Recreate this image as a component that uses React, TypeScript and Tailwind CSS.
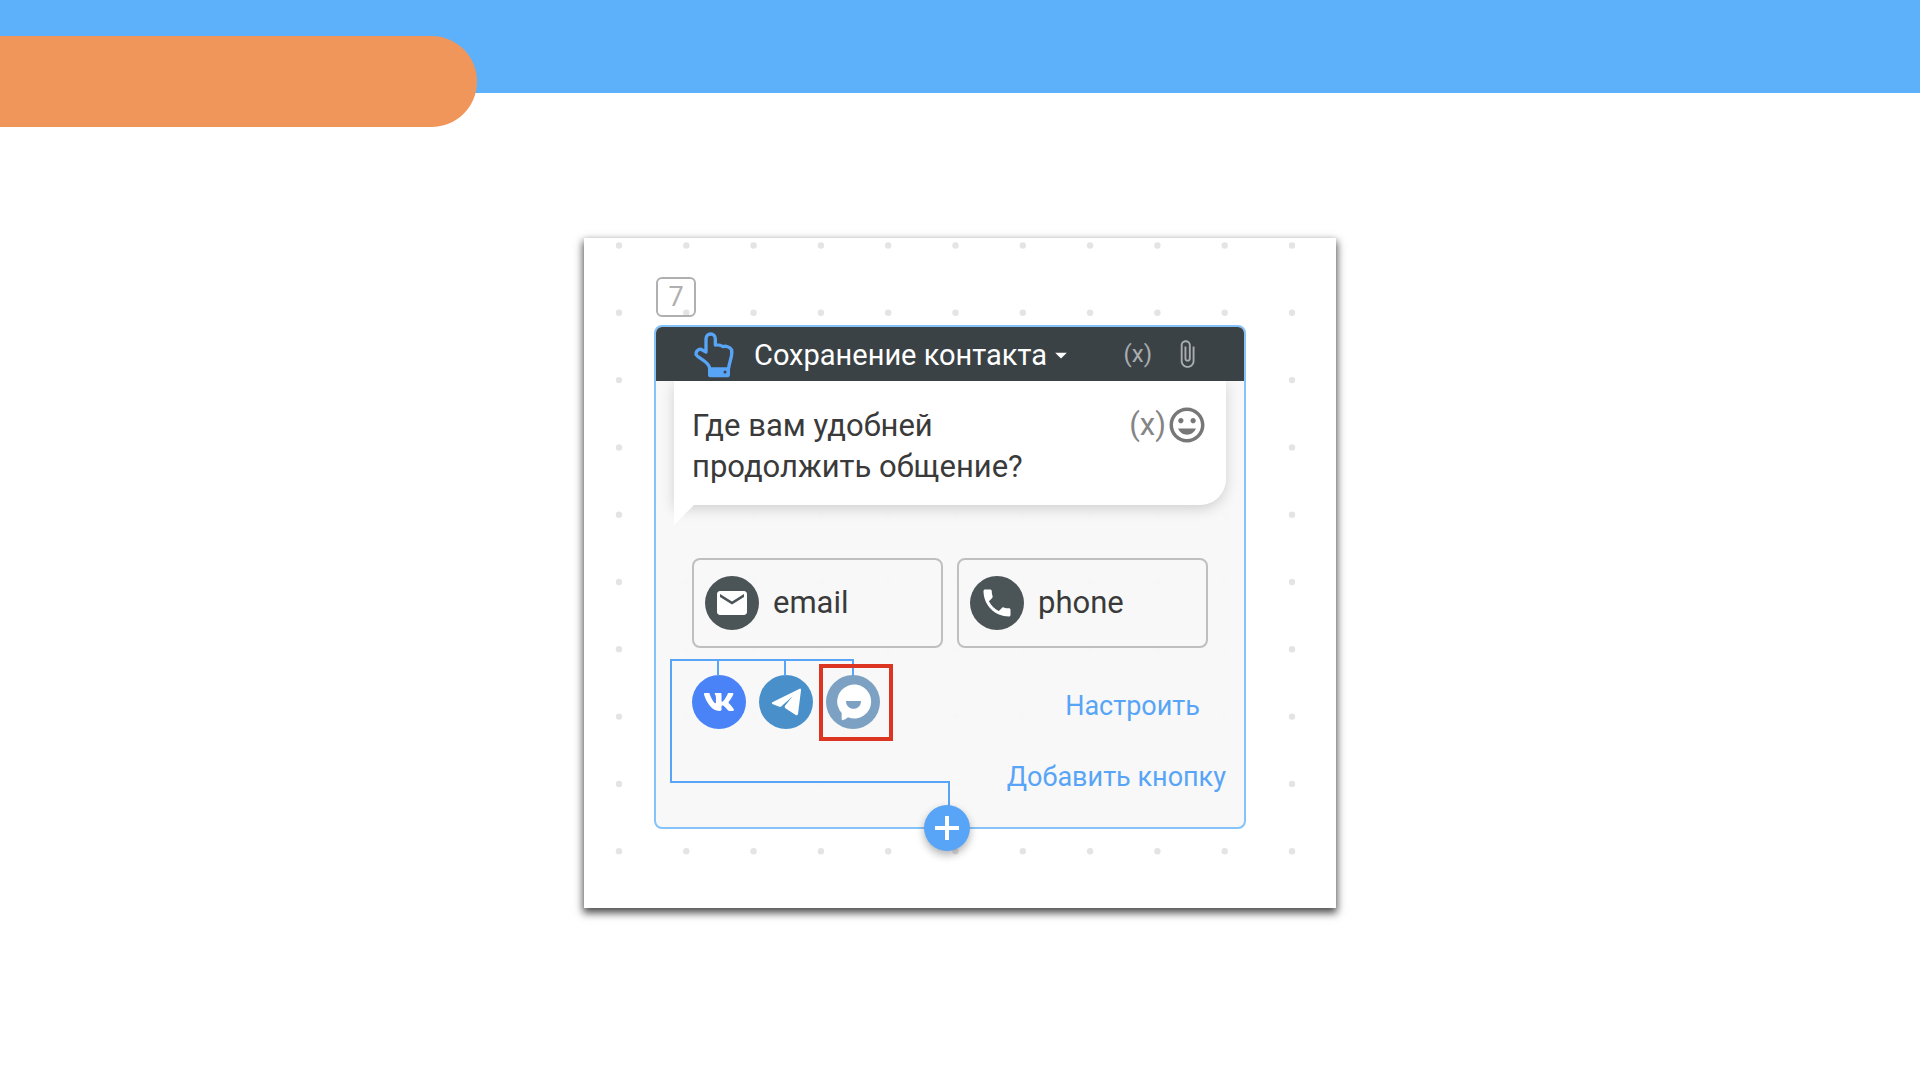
import { FaVk } from 'react-icons/fa';
import { MdArrowDropDown, MdAttachFile, MdEmail, MdInsertEmoticon, MdPhone } from 'react-icons/md';

const DOT_STEP = 67.3;

const DotGrid = () => {
	const dots = [];
	for (let row = 0; row < 10; row++) {
		for (let col = 0; col < 11; col++) {
			dots.push(<circle key={`${row}-${col}`} cx={35 + col * DOT_STEP} cy={7.5 + row * DOT_STEP} r="3.2" />);
		}
	}
	return (
		<svg className="absolute left-0 top-0 w-full" viewBox="0 0 752 670" fill="#e4e4e4" aria-hidden="true">
			{dots}
		</svg>
	);
};

const HandIcon = () => (
	<svg className="w-10 h-[46px] shrink-0" viewBox="373 337 120 138" fill="none" aria-hidden="true">
		<path
			d="M420 446C418 424 384 416 379 404C379 391 391 386 398 391L409 397V358C409 338 437 338 437 358V376C447 375 452 376 460 381C468 378 481 381 486 391C489 412 479 424 477 446"
			stroke="#58a5f7"
			strokeWidth="10"
			strokeLinejoin="round"
		/>
		<path d="M415 443H481V465Q480 473 472 473H424Q415 473 415 465Z" fill="#58a5f7" />
		<circle cx="466" cy="457" r="4.5" fill="#3b4246" />
	</svg>
);

const TelegramIcon = () => (
	<svg className="size-full" viewBox="237 344 162 162" fill="#fff" aria-hidden="true">
		<path d="M277 426L359 385Q364 384 363 390L354 461Q352 467 346 463L316 444Q312 440 315 436L338 408L306 436Q302 441 298 439L277 431Q274 428 277 426Z" />
	</svg>
);

const ChatIcon = () => (
	<svg className="size-full" viewBox="439 344 162 162" aria-hidden="true">
		<path d="M486 458A51 51 0 1 1 505 471Q497 478 488 480Q486 479 486 475Z" fill="#fff" />
		<path d="M499 422H544C544 453 499 453 499 422Z" fill="#7ca1c2" />
	</svg>
);

const Connector = () => (
	<svg
		className="absolute left-0 top-[332px] w-[296px] h-[148px]"
		viewBox="0 0 296 148"
		fill="none"
		stroke="#58a5f7"
		strokeWidth="2"
		aria-hidden="true"
	>
		<path d="M197 17V1H15V123H293V148M62 1V17M129 1V17" />
	</svg>
);

const contacts = [
	{ label: 'email', Icon: MdEmail },
	{ label: 'phone', Icon: MdPhone },
];

const ContactBlock = () => (
	<section className="relative border-2 border-[#85c4fa] rounded-lg bg-[#f8f8f8]/95">
		<div className="flex items-center justify-between h-[54px] pl-[38px] pr-[42px] rounded-t-md bg-[#3b4246]">
			<div className="flex items-center gap-5 pt-0.5">
				<HandIcon />
				<button className="flex items-center text-[29px] leading-8 text-white">
					Сохранение контакта
					<MdArrowDropDown className="size-7" />
				</button>
			</div>
			<div className="flex items-center gap-5 text-[#a9adaf]">
				<button className="text-2xl">(x)</button>
				<button aria-label="Attach">
					<MdAttachFile className="size-[30px]" />
				</button>
			</div>
		</div>

		<div className="relative mx-[18px] h-[124px] px-[18px] pt-6 flex justify-between items-start bg-white rounded-br-[26px] shadow-[0_4px_14px_rgba(0,0,0,0.16)] [clip-path:inset(0_-18px_-40px_-18px)]">
			<p className="w-[360px] text-[31px] leading-[41px] text-[#3a3a3a]">Где вам удобней продолжить общение?</p>
			<div className="flex items-center h-10 text-[#777]">
				<button className="text-[31px] text-[#858585]">(x)</button>
				<button aria-label="Emoji">
					<MdInsertEmoticon className="size-[42px]" />
				</button>
			</div>
			<svg className="absolute left-0 top-full w-5 h-5" viewBox="0 0 20 20" fill="#fff" aria-hidden="true">
				<path d="M0 0H20L0 20Z" />
			</svg>
		</div>

		<div className="flex gap-[14px] mt-[53px] mx-9">
			{contacts.map(({ label, Icon }) => (
				<button
					key={label}
					className="flex-1 flex items-center gap-[14px] h-[90px] pl-[11px] border-2 border-[#bfbfbf] rounded-lg text-[31px] leading-10 text-[#3a3a3a]"
				>
					<span className="flex items-center justify-center size-[54px] rounded-full bg-[#4b5457] text-white">
						<Icon className="size-9" />
					</span>
					{label}
				</button>
			))}
		</div>

		<Connector />

		<div className="flex items-start gap-[13px] mt-[27px] mx-9 h-[84px]">
			<button className="flex items-center justify-center size-[54px] rounded-full bg-[#4a82f8] text-white" aria-label="VK">
				<FaVk className="size-8" />
			</button>
			<button className="size-[54px] rounded-full bg-[#4990cb]" aria-label="Telegram">
				<TelegramIcon />
			</button>
			<button className="relative size-[54px] rounded-full bg-[#7ca1c2]" aria-label="Chat">
				<ChatIcon />
				<span className="absolute -left-[7px] -top-[11px] w-[74px] h-[77px] border-4 border-[#dc3522]" />
			</button>
			<button className="ml-auto mr-2 mt-[13px] text-[27px] leading-9 text-[#58a5f7]">Настроить</button>
		</div>
		<div className="flex justify-end mr-[18px] mb-8">
			<button className="text-[27px] leading-9 text-[#58a5f7]">Добавить кнопку</button>
		</div>

		<button
			className="absolute left-[268px] -bottom-6 size-[46px] rounded-full bg-[#58a5f7] shadow-[0_4px_8px_rgba(0,0,0,0.3)]"
			aria-label="Add"
		>
			<svg viewBox="0 0 46 46" stroke="#fff" strokeWidth="4" aria-hidden="true">
				<path d="M11 23H35M23 11V35" />
			</svg>
		</button>
	</section>
);

export default function App() {
	return (
		<div className="min-h-screen bg-white font-[Roboto,sans-serif]">
			<header className="h-[93px] pt-9 bg-[#5db1fb]">
				<div className="w-[477px] h-[91px] rounded-r-full bg-[#f0965b]" />
			</header>

			<main className="flex justify-center pt-[145px]">
				<div className="relative w-[752px] pt-[39px] pb-[79px] pl-[70px] pr-[90px] bg-white shadow-[0_4px_8px_1px_rgba(0,0,0,0.7)]">
					<DotGrid />
					<div className="relative flex items-center justify-center size-10 ml-[2px] mb-2 border-2 border-[#b0b0b0] rounded-md text-[27px] text-[#b0b0b0]">
						7
					</div>
					<ContactBlock />
				</div>
			</main>
		</div>
	);
}
